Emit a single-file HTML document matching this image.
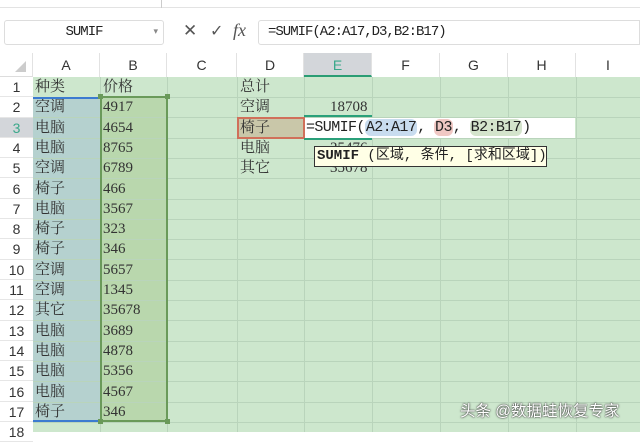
<!DOCTYPE html>
<html><head><meta charset="utf-8"><style>
*{margin:0;padding:0;box-sizing:border-box}
body{width:640px;height:432px;overflow:hidden;background:#fff;position:relative;font-family:"Liberation Serif","Noto Serif CJK SC",serif;}
.top{position:absolute;left:0;top:0;width:640px;height:8px;background:#fff;border-bottom:1px solid #e3e3e3}
.nb{position:absolute;left:4px;top:20px;width:160px;height:25px;border:1px solid #ddd;border-radius:3px;font-size:14px;text-align:center;line-height:23px;font-family:"Liberation Mono",monospace;color:#222;letter-spacing:-1px}
.fb{position:absolute;left:258px;top:20px;width:382px;height:25px;border:1px solid #ddd;border-radius:3px 0 0 3px;font-size:14px;line-height:23px;padding-left:9px;font-family:"Liberation Mono",monospace;color:#222;letter-spacing:-1px}
.hdr{position:absolute;top:53px;height:24px;font-family:"Liberation Sans",sans-serif;font-size:14px;color:#333;text-align:center;line-height:24px;border-right:1px solid #e2e2e2;background:#fff}
.rh{position:absolute;left:0;width:33px;height:20.3px;font-family:"Liberation Sans",sans-serif;font-size:14px;color:#333;text-align:center;line-height:20px;background:#fff;border-bottom:1px solid #e6e6e6}
.grid{position:absolute;left:33px;top:77px;width:607px;height:355px;background:#cde7cd}
.c{position:absolute;font-size:15px;color:#333;line-height:20px;white-space:nowrap}
.vl{position:absolute;top:77px;height:355px;width:1px;background:#b9d4bb}
.hl{position:absolute;left:33px;width:607px;height:1px;background:#b9d4bb}
</style></head><body>
<div class="top"></div>
<div style="position:absolute;left:158px;top:0;width:4px;height:8px;border-right:1px solid #ccc"></div>
<div class="nb">SUMIF<span style="position:absolute;right:6px;font-size:9px;color:#888">▾</span></div>
<div style="position:absolute;left:183px;top:21px;font-family:'Liberation Sans',sans-serif;font-size:17px;color:#555">✕</div>
<div style="position:absolute;left:210px;top:21px;font-family:'Liberation Sans',sans-serif;font-size:16px;color:#555">✓</div>
<div style="position:absolute;left:233px;top:20px;font-family:'Liberation Serif',serif;font-style:italic;font-size:18px;color:#555">fx</div>
<div class="fb">=SUMIF(A2:A17,D3,B2:B17)</div>

<div class="grid"></div>
<div style="position:absolute;left:33px;top:97px;width:67px;height:325px;background:#b5d1cf"></div>
<div style="position:absolute;left:100px;top:97px;width:67px;height:325px;background:#b9d7ad"></div>
<div style="position:absolute;left:237px;top:117.6px;width:67px;height:20.3px;background:#c9c7a9"></div>
<div class="vl" style="left:100px"></div><div class="vl" style="left:167px"></div><div class="vl" style="left:237px"></div><div class="vl" style="left:304px"></div><div class="vl" style="left:372px"></div><div class="vl" style="left:440px"></div><div class="vl" style="left:508px"></div><div class="vl" style="left:576px"></div>
<div class="hl" style="top:97px"></div><div class="hl" style="top:117.3px"></div><div class="hl" style="top:137.6px"></div><div class="hl" style="top:157.9px"></div><div class="hl" style="top:178.2px"></div><div class="hl" style="top:198.5px"></div><div class="hl" style="top:218.8px"></div><div class="hl" style="top:239.1px"></div><div class="hl" style="top:259.4px"></div><div class="hl" style="top:279.7px"></div><div class="hl" style="top:300px"></div><div class="hl" style="top:320.3px"></div><div class="hl" style="top:340.6px"></div><div class="hl" style="top:360.9px"></div><div class="hl" style="top:381.2px"></div><div class="hl" style="top:401.5px"></div><div class="hl" style="top:421.8px"></div>

<div class="hdr" style="left:0;width:33px;border-bottom:1px solid #ddd"><span style="position:absolute;left:15px;top:8px;width:0;height:0;border-left:11px solid transparent;border-bottom:11px solid #ccc"></span></div>
<div class="hdr" style="left:33px;width:67px">A</div>
<div class="hdr" style="left:100px;width:67px">B</div>
<div class="hdr" style="left:167px;width:70px">C</div>
<div class="hdr" style="left:237px;width:67px">D</div>
<div class="hdr" style="left:304px;width:68px;background:#d3d6da;color:#3aa88a;border-bottom:2px solid #2a9d74">E</div>
<div class="hdr" style="left:372px;width:68px">F</div>
<div class="hdr" style="left:440px;width:68px">G</div>
<div class="hdr" style="left:508px;width:68px">H</div>
<div class="hdr" style="left:576px;width:64px;border-right:none">I</div>

<div class="rh" style="top:77px">1</div><div class="rh" style="top:97.3px">2</div><div class="rh" style="top:117.6px;background:#d3d6da;color:#3aa88a">3</div><div class="rh" style="top:137.9px">4</div><div class="rh" style="top:158.2px">5</div><div class="rh" style="top:178.5px">6</div><div class="rh" style="top:198.8px">7</div><div class="rh" style="top:219.1px">8</div><div class="rh" style="top:239.4px">9</div><div class="rh" style="top:259.7px">10</div><div class="rh" style="top:280px">11</div><div class="rh" style="top:300.3px">12</div><div class="rh" style="top:320.6px">13</div><div class="rh" style="top:340.9px">14</div><div class="rh" style="top:361.2px">15</div><div class="rh" style="top:381.5px">16</div><div class="rh" style="top:401.8px">17</div><div class="rh" style="top:422.1px">18</div>

<div class="c" style="left:35px;top:77px">种类</div>
<div class="c" style="left:35px;top:97.3px">空调</div><div class="c" style="left:35px;top:117.6px">电脑</div><div class="c" style="left:35px;top:137.9px">电脑</div><div class="c" style="left:35px;top:158.2px">空调</div><div class="c" style="left:35px;top:178.5px">椅子</div><div class="c" style="left:35px;top:198.8px">电脑</div><div class="c" style="left:35px;top:219.1px">椅子</div><div class="c" style="left:35px;top:239.4px">椅子</div><div class="c" style="left:35px;top:259.7px">空调</div><div class="c" style="left:35px;top:280px">空调</div><div class="c" style="left:35px;top:300.3px">其它</div><div class="c" style="left:35px;top:320.6px">电脑</div><div class="c" style="left:35px;top:340.9px">电脑</div><div class="c" style="left:35px;top:361.2px">电脑</div><div class="c" style="left:35px;top:381.5px">电脑</div><div class="c" style="left:35px;top:401.8px">椅子</div>
<div class="c" style="left:103px;top:77px">价格</div>
<div class="c" style="left:103px;top:97.3px">4917</div><div class="c" style="left:103px;top:117.6px">4654</div><div class="c" style="left:103px;top:137.9px">8765</div><div class="c" style="left:103px;top:158.2px">6789</div><div class="c" style="left:103px;top:178.5px">466</div><div class="c" style="left:103px;top:198.8px">3567</div><div class="c" style="left:103px;top:219.1px">323</div><div class="c" style="left:103px;top:239.4px">346</div><div class="c" style="left:103px;top:259.7px">5657</div><div class="c" style="left:103px;top:280px">1345</div><div class="c" style="left:103px;top:300.3px">35678</div><div class="c" style="left:103px;top:320.6px">3689</div><div class="c" style="left:103px;top:340.9px">4878</div><div class="c" style="left:103px;top:361.2px">5356</div><div class="c" style="left:103px;top:381.5px">4567</div><div class="c" style="left:103px;top:401.8px">346</div>
<div class="c" style="left:240px;top:77px">总计</div>
<div class="c" style="left:240px;top:97.3px">空调</div><div class="c" style="left:330px;top:97.3px">18708</div>
<div class="c" style="left:240px;top:117.6px">椅子</div>
<div class="c" style="left:240px;top:137.9px">电脑</div><div class="c" style="left:330px;top:137.9px">25476</div>
<div class="c" style="left:240px;top:158.2px">其它</div><div class="c" style="left:330px;top:158.2px">35678</div>

<div style="position:absolute;left:33px;top:97px;width:67px;height:325px;border-top:2px solid #3c7bd0;border-bottom:2px solid #3c7bd0"></div>
<div style="position:absolute;left:100px;top:96px;width:68px;height:326px;border:2px solid #6a9a5a"></div>
<div style="position:absolute;left:98px;top:94px;width:5px;height:5px;background:#6a9a5a"></div>
<div style="position:absolute;left:165px;top:94px;width:5px;height:5px;background:#6a9a5a"></div>
<div style="position:absolute;left:98px;top:419px;width:5px;height:5px;background:#6a9a5a"></div>
<div style="position:absolute;left:165px;top:419px;width:5px;height:5px;background:#6a9a5a"></div>
<div style="position:absolute;left:237px;top:117px;width:68px;height:22px;border:2px solid #d0705a"></div>
<div style="position:absolute;left:304px;top:115px;width:68px;height:2px;background:#2aa07a"></div>
<div style="position:absolute;left:304px;top:138px;width:68px;height:2px;background:#2aa07a"></div>

<div style="position:absolute;left:305px;top:118px;width:270px;height:20px;background:#fff;font-family:'Liberation Mono',monospace;font-size:15px;line-height:20px;color:#222;padding-left:1px;letter-spacing:-0.6px">=SUMIF(<span style="background:#c8dcef;border-radius:6px;padding:0 1px">A2:A17</span>, <span style="background:#f0c8c4;border-radius:6px;padding:0 1px">D3</span>, <span style="background:#d4e4cc;border-radius:6px;padding:0 1px">B2:B17</span>)</div>
<div style="position:absolute;left:314px;top:146px;width:233px;height:21px;background:#ffffe6;border:1px solid #333;font-family:'Liberation Mono','Noto Sans CJK SC',monospace;font-size:14px;line-height:19px;padding-left:2px;color:#222;white-space:nowrap"><b>SUMIF</b> (区域, 条件, [求和区域])</div>

<div style="position:absolute;left:460px;top:399px;font-family:'Liberation Sans','Noto Sans CJK SC',sans-serif;font-size:15.5px;color:#fff;text-shadow:0 0 2px #333,0 0 1px #333">头条 @数据蛙恢复专家</div>
</body></html>
